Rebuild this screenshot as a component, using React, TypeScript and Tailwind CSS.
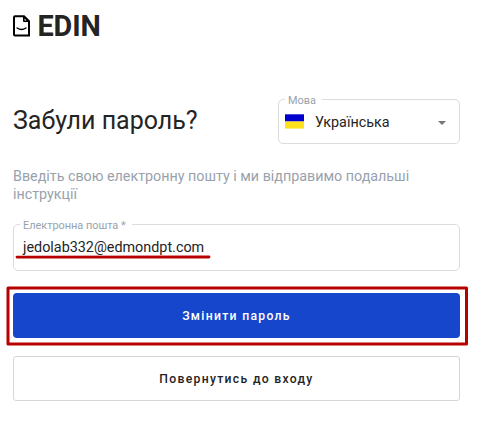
import React from "react";

function Logo() {
  return (
    <div className="flex h-[30px] items-center">
      <svg className="h-[22px] w-[17px]" viewBox="0 0 17 22" fill="none">
        <path d="M2 1.2H11L16 6.2V20.6H2Q1 20.6 1 19.6V2.2Q1 1.2 2 1.2Z" stroke="#000" strokeWidth="2" />
        <path d="M10.5 1V6.5H16Z" fill="#000" stroke="#000" strokeWidth="1" />
        <path d="M11.6 3.6V5.5H13.5Z" fill="#fff" />
        <path d="M4.1 13Q8.5 16 12.9 13" stroke="#000" strokeWidth="1.5" strokeLinecap="round" />
      </svg>
      <span className="ml-[7.5px] text-[28.8px] leading-[30px] font-bold tracking-[-0.1px]">EDIN</span>
    </div>
  );
}

function Field({ label, className, children }: { label: string; className: string; children: React.ReactNode }) {
  return (
    <div className={`relative flex items-center rounded-[5px] border border-[#dcdcdc] ${className}`}>
      <span className="absolute -top-[6px] left-[6px] bg-white pr-[6px] pl-[3px] text-[10.9px] leading-[14px] whitespace-nowrap text-[#98a2ad]">
        {label}
      </span>
      {children}
    </div>
  );
}

export default function App() {
  return (
    <main className="relative h-[427px] w-[481px] overflow-hidden bg-white pt-[11px] pl-[13px] font-['Roboto',sans-serif] text-[#242424]">
      <Logo />
      <div className="mt-[58px] flex w-[447px] items-center justify-between">
        <h1 className="-mt-[2px] text-[25px] leading-[30px] whitespace-nowrap">Забули пароль?</h1>
        <Field label="Мова" className="h-[45px] w-[182px]">
          <svg className="ml-[6px] h-[15px] w-[19px]" viewBox="0 0 19 15">
            <path fill="#0000cd" d="M0 0.3H19V7.5H0Z" />
            <path fill="#ffe01a" d="M0 7.5H19V14.6H0Z" />
          </svg>
          <span className="mt-[2px] ml-[11px] text-[14.35px] leading-[18px]">Українська</span>
          <svg className="mt-[2px] mr-[13px] ml-auto h-[4px] w-[8px]" viewBox="0 0 8 4">
            <path fill="#757575" d="M0 0H8L4 4Z" />
          </svg>
        </Field>
      </div>
      <p className="mt-[23px] text-[14.3px] leading-[18px] text-[#98a2ad]">
        Введіть свою електронну пошту і ми відправимо подальші
        <br />
        інструкції
      </p>
      <Field label="Електронна пошта *" className="mt-[21px] h-[47px] w-[447px]">
        <span className="ml-[9px] text-[14.37px]">jedolab332@edmondpt.com</span>
      </Field>
      <button className="mt-[22px] block h-[45px] w-[447px] rounded-[4px] bg-[#1546cc] pt-[2px] text-[12.2px] leading-[17px] font-medium tracking-[1.3px] text-white">
        Змінити пароль
      </button>
      <button className="mt-[18px] block h-[45px] w-[447px] rounded-[3px] border border-[#d6d6d6] pt-[2px] text-[12.2px] leading-[17px] font-medium tracking-[1.3px]">
        Повернутись до входу
      </button>
      <svg className="pointer-events-none absolute inset-0 h-[427px] w-[481px]" viewBox="0 0 481 427" fill="none" stroke="#b80000">
        <path d="M17 257.1L209 257" strokeWidth="2.8" strokeLinecap="round" />
        <rect x="8" y="288" width="458.5" height="56" strokeWidth="3" strokeLinejoin="round" />
      </svg>
    </main>
  );
}
